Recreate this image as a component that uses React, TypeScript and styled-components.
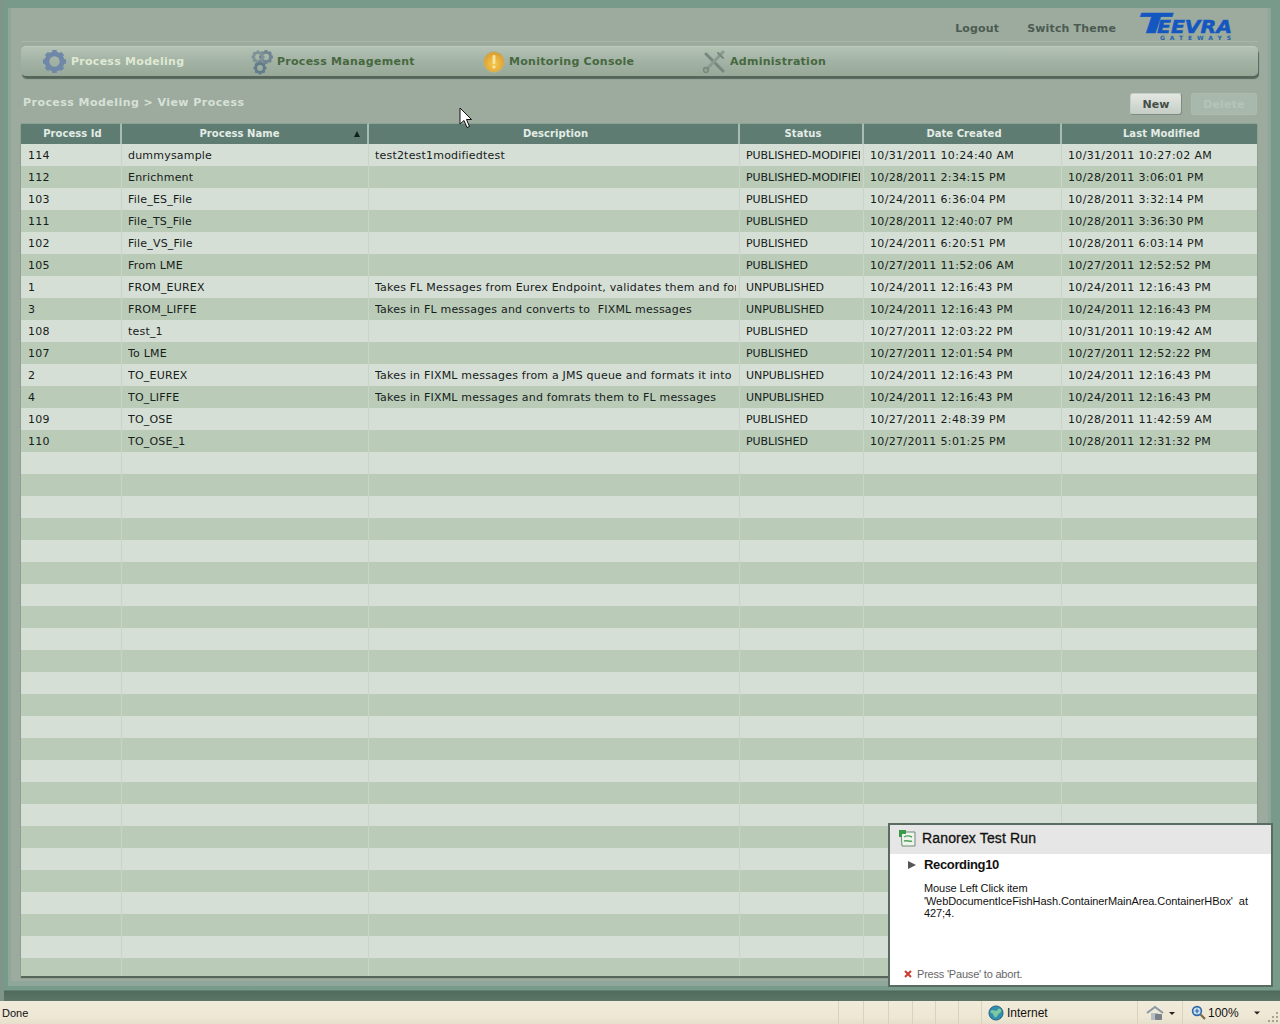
import React from "react";
import styled, { createGlobalStyle } from "styled-components";

const Global = createGlobalStyle`
  html, body { margin: 0; padding: 0; height: 100%; overflow: hidden; background: #5f7d6f; }
  #root { height: 1024px; }
`;

const UI = `"DejaVu Sans", Verdana, sans-serif`;
const SYS = `"Liberation Sans", Arial, sans-serif`;

const Page = styled.div`
  position: relative;
  width: 1280px;
  height: 1024px;
  display: flex;
  flex-direction: column;
  overflow: hidden;
  font-family: ${UI};
`;
const Frame = styled.div`
  height: 1001px;
  flex: none;
  box-sizing: border-box;
  padding: 8px 9px 15px 4px;
  border-left: 4px solid #7f9589;
  background: linear-gradient(180deg, #789a8a 0, #789a8a 98.9%, #4f6a5b 99%, #5c7567 100%);
  display: flex;
`;
const Panel = styled.div`
  flex: 1;
  min-width: 0;
  box-sizing: border-box;
  padding: 0 10px;
  border-left: 3px solid #8fa79a;
  border-right: 3px solid #8fa79a;
  border-bottom: 5px solid #8fa79a;
  background: #9cab9e;
  display: flex;
  flex-direction: column;
`;
const TopBar = styled.div`
  height: 34px;
  flex: none;
  box-sizing: border-box;
  padding: 0 26px 0 0;
  display: flex;
  align-items: center;
  justify-content: flex-end;
  gap: 22px;
  border-bottom: 1px solid #a8b6aa;
`;
const TopLink = styled.a<{ $after?: number }>`
  font-size: 11px;
  font-weight: 700;
  letter-spacing: 0.15px;
  color: #4c5b52;
  margin-top: 7px;
  margin-right: ${(p) => p.$after ?? 0}px;
`;
const Logo = styled.svg`
  width: 94px;
  height: 26px;
  margin-top: 6px;
  overflow: visible;
`;
const Nav = styled.nav`
  height: 30px;
  flex: none;
  box-sizing: border-box;
  margin: 4px 0 0 0;
  border-radius: 5px;
  border-top: 1px solid #bdcbbd;
  background: linear-gradient(180deg, #b3c2b3 0, #a2b2a4 50%, #97a898 100%);
  box-shadow: 1px 3px 1px #56665a;
  display: flex;
  align-items: center;
`;
const NavItem = styled.div<{ $w: number; $pad?: number }>`
  width: ${(p) => p.$w}px;
  flex: none;
  box-sizing: border-box;
  padding-left: ${(p) => p.$pad ?? 0}px;
  display: flex;
  align-items: center;
  gap: 4px;
  font-size: 11px;
  font-weight: 700;
  letter-spacing: 0.27px;
`;
const NavLabel = styled.span<{ $active?: boolean }>`
  color: ${(p) => (p.$active ? "#dfe9d2" : "#47683f")};
`;
const CrumbRow = styled.div`
  height: 47px;
  flex: none;
  display: flex;
  align-items: center;
  justify-content: space-between;
  padding: 0 1px 0 2px;
`;
const Crumb = styled.div`
  font-size: 11px;
  font-weight: 700;
  letter-spacing: 0.45px;
  color: #d7e0d6;
  margin-top: 5px;
`;
const Buttons = styled.div`
  display: flex;
  gap: 9px;
  margin-top: 9px;
`;
const Btn = styled.button<{ $off?: boolean }>`
  height: 22px;
  padding: 0;
  width: ${(p) => (p.$off ? 66 : 52)}px;
  font-family: ${UI};
  font-size: 11px;
  font-weight: 700;
  letter-spacing: ${(p) => (p.$off ? 0.2 : 0)}px;
  border-radius: 3px;
  border: 1px solid ${(p) => (p.$off ? "#aebcb0" : "#c6cfc7")};
  border-right-color: ${(p) => (p.$off ? "#aebcb0" : "#7d8b80")};
  border-bottom-color: ${(p) => (p.$off ? "#aebcb0" : "#7d8b80")};
  color: ${(p) => (p.$off ? "#b6c4b8" : "#454f48")};
  background: ${(p) => (p.$off ? "#a9b8ac" : "linear-gradient(180deg,#e3e7e2,#c5cdc6)")};
`;
const TableWrap = styled.div`
  flex: 1;
  min-height: 0;
  margin: 0 1px 5px 0;
  overflow: hidden;
  box-shadow: 0 2px 1px #56665a;
  background: #bacbb8;
`;
const Grid = styled.table`
  width: 1236px;
  table-layout: fixed;
  border-collapse: separate;
  border-spacing: 0;
`;
const Col = styled.col<{ $w: number }>`
  width: ${(p) => p.$w}px;
`;
const Th = styled.th<{ $sorted?: boolean }>`
  height: 21px;
  padding: 0 ${(p) => (p.$sorted ? 14 : 0)}px 2px 4px;
  position: relative;
  box-sizing: border-box;
  background: #5f7c72;
  color: #e3ece6;
  font-size: 10px;
  font-weight: 700;
  letter-spacing: 0.05px;
  text-align: center;
  border-right: 2px solid #a9bcb2;
  border-top: 1px solid #8aa396;
  &:last-child { border-right: none; }
`;
const SortMark = styled.span`
  position: absolute;
  right: 7px;
  top: 7px;
  width: 0;
  height: 0;
  border-left: 3px solid transparent;
  border-right: 3px solid transparent;
  border-bottom: 6px solid #10201a;
`;
const Tr = styled.tr<{ $odd: boolean }>`
  height: 22px;
  background: ${(p) => (p.$odd ? "#bacbb8" : "#d6dfd6")};
`;
const Td = styled.td`
  padding: 0 3px 0 6px;
  height: 22px;
  box-sizing: border-box;
  font-size: 11px;
  letter-spacing: 0.2px;
  color: #16201a;
  border-right: 1px solid #c8d4c8;
  &:first-child { padding-left: 7px; }
  &:nth-child(4) { letter-spacing: -0.05px; }
  &:nth-child(n + 5) { letter-spacing: 0.33px; }
  &:last-child { border-right: none; }
`;
const CellText = styled.div`
  white-space: pre;
  overflow: hidden;
`;
const StatusBar = styled.footer`
  flex: 1;
  display: flex;
  align-items: center;
  background: linear-gradient(180deg, #f1ebdb 0, #eee7d4 70%, #e6dfcb 100%);
  font-family: ${SYS};
  font-size: 12px;
  color: #111;
`;
const Done = styled.span`
  width: 838px;
  flex: none;
  box-sizing: border-box;
  padding-left: 2px;
  font-size: 11px;
`;
const Well = styled.span<{ $w: number; $pad?: number; $gap?: number }>`
  width: ${(p) => p.$w}px;
  height: 100%;
  flex: none;
  display: flex;
  align-items: center;
  gap: ${(p) => p.$gap ?? 3}px;
  box-sizing: border-box;
  padding-left: ${(p) => p.$pad ?? 0}px;
  border-left: 1px solid #d9d2bd;
`;
const Drop = styled.svg`
  margin-left: 11px;
`;
const Popup = styled.aside`
  position: absolute;
  left: 888px;
  top: 823px;
  width: 385px;
  height: 164px;
  box-sizing: border-box;
  border: 2px solid #5a6b62;
  background: #fff;
  font-family: ${SYS};
  display: flex;
  flex-direction: column;
  color: #111;
`;
const PopHead = styled.div`
  height: 29px;
  flex: none;
  box-sizing: border-box;
  padding: 0 0 3px 8px;
  background: #e6e6e6;
  display: flex;
  align-items: center;
  gap: 5px;
  font-size: 14px;
  letter-spacing: 0.15px;
  -webkit-text-stroke: 0.3px #111;
`;
const PopTitle = styled.div`
  display: flex;
  align-items: center;
  gap: 7px;
  padding: 3px 0 0 17px;
  font-size: 13px;
  font-weight: 700;
  letter-spacing: -0.35px;
`;
const PopBody = styled.div`
  flex: 1;
  padding: 10px 0 0 34px;
  font-size: 11px;
  line-height: 12.6px;
  letter-spacing: -0.08px;
  white-space: nowrap;
`;
const PopFoot = styled.div`
  height: 22px;
  flex: none;
  display: flex;
  align-items: center;
  gap: 5px;
  padding-left: 14px;
  font-size: 11px;
  letter-spacing: -0.2px;
  color: #666;
`;
const Cursor = styled.svg`
  position: absolute;
  left: 459px;
  top: 107px;
`;
const Grip = styled.svg`
  position: absolute;
  right: 1px;
  bottom: 1px;
`;

const cols = [101, 247, 371, 124, 198, 195];
const heads = ["Process Id", "Process Name", "Description", "Status", "Date Created", "Last Modified"];
const P = "PUBLISHED";
const U = "UNPUBLISHED";
const M = "PUBLISHED-MODIFIED";
const rows: string[][] = [
  ["114", "dummysample", "test2test1modifiedtest", M, "10/31/2011 10:24:40 AM", "10/31/2011 10:27:02 AM"],
  ["112", "Enrichment", "", M, "10/28/2011 2:34:15 PM", "10/28/2011 3:06:01 PM"],
  ["103", "File_ES_File", "", P, "10/24/2011 6:36:04 PM", "10/28/2011 3:32:14 PM"],
  ["111", "File_TS_File", "", P, "10/28/2011 12:40:07 PM", "10/28/2011 3:36:30 PM"],
  ["102", "File_VS_File", "", P, "10/24/2011 6:20:51 PM", "10/28/2011 6:03:14 PM"],
  ["105", "From LME", "", P, "10/27/2011 11:52:06 AM", "10/27/2011 12:52:52 PM"],
  ["1", "FROM_EUREX", "Takes FL Messages from Eurex Endpoint, validates them and forwards them", U, "10/24/2011 12:16:43 PM", "10/24/2011 12:16:43 PM"],
  ["3", "FROM_LIFFE", "Takes in FL messages and converts to  FIXML messages", U, "10/24/2011 12:16:43 PM", "10/24/2011 12:16:43 PM"],
  ["108", "test_1", "", P, "10/27/2011 12:03:22 PM", "10/31/2011 10:19:42 AM"],
  ["107", "To LME", "", P, "10/27/2011 12:01:54 PM", "10/27/2011 12:52:22 PM"],
  ["2", "TO_EUREX", "Takes in FIXML messages from a JMS queue and formats it into FL messages", U, "10/24/2011 12:16:43 PM", "10/24/2011 12:16:43 PM"],
  ["4", "TO_LIFFE", "Takes in FIXML messages and fomrats them to FL messages", U, "10/24/2011 12:16:43 PM", "10/24/2011 12:16:43 PM"],
  ["109", "TO_OSE", "", P, "10/27/2011 2:48:39 PM", "10/28/2011 11:42:59 AM"],
  ["110", "TO_OSE_1", "", P, "10/27/2011 5:01:25 PM", "10/28/2011 12:31:32 PM"],
];
const blank = ["", "", "", "", "", ""];
const allRows = [...rows, ...Array.from({ length: 24 }, () => blank)];
const emptyWells = [25, 25, 24, 23, 23, 23];

const Gear = ({ x, y, r, fill }: { x: number; y: number; r: number; fill: string }) => (
  <g>
    <circle cx={x} cy={y} r={r * 0.66} fill="none" stroke={fill} strokeWidth={r * 0.42} />
    {[0, 45, 90, 135, 180, 225, 270, 315].map((a) => (
      <rect key={a} x={x - r * 0.2} y={y - r} width={r * 0.4} height={r * 0.4} fill={fill} transform={`rotate(${a} ${x} ${y})`} />
    ))}
  </g>
);

export default function App() {
  return (
    <Page>
      <Global />
      <Frame>
        <Panel>
          <TopBar>
            <TopLink $after={6}>Logout</TopLink>
            <TopLink>Switch Theme</TopLink>
            <Logo viewBox="0 0 94 26" role="img">
              <text x="0" y="18" fontFamily={UI} fontSize="27" fontWeight="900" fontStyle="italic" fill="#1457c0" stroke="#1457c0" strokeWidth=".5" textLength="32" lengthAdjust="spacingAndGlyphs">T</text>
              <text x="19" y="18" fontFamily={UI} fontSize="17" fontWeight="900" fontStyle="italic" fill="#1457c0" stroke="#1457c0" strokeWidth=".5" textLength="75" lengthAdjust="spacingAndGlyphs">EEVRA</text>
              <text x="22" y="24.5" fontFamily={UI} fontSize="6" fontWeight="700" fill="#1f62ac" textLength="71" lengthAdjust="spacing">GATEWAYS</text>
            </Logo>
          </TopBar>
          <Nav>
            <NavItem $w={230} $pad={21}>
              <svg width="25" height="25" viewBox="0 0 25 25">
                <Gear x={12.5} y={12.5} r={11.5} fill="#6f88a8" />
              </svg>
              <NavLabel $active>Process Modeling</NavLabel>
            </NavItem>
            <NavItem $w={232}>
              <svg width="22" height="26" viewBox="0 0 22 26">
                <Gear x={15} y={8} r={7} fill="#6f8590" />
                <Gear x={7} y={8} r={6.5} fill="#7f9398" />
                <Gear x={9} y={19} r={6.5} fill="#647c8a" />
              </svg>
              <NavLabel>Process Management</NavLabel>
            </NavItem>
            <NavItem $w={219}>
              <svg width="22" height="22" viewBox="0 0 22 22">
                <defs>
                  <radialGradient id="amb" cx="50%" cy="60%" r="60%">
                    <stop offset="0" stopColor="#f7c94e" />
                    <stop offset="1" stopColor="#d99a2e" />
                  </radialGradient>
                </defs>
                <circle cx="11" cy="11" r="10.5" fill="url(#amb)" stroke="#aab59a" />
                <rect x="9.6" y="4" width="2.8" height="9" rx="1.2" fill="#f4e6a0" />
                <circle cx="11" cy="16" r="1.6" fill="#f4e6a0" />
              </svg>
              <NavLabel>Monitoring Console</NavLabel>
            </NavItem>
            <NavItem $w={180}>
              <svg width="24" height="24" viewBox="0 0 24 24" fill="none" strokeLinecap="round">
                <path d="M4 4L21 21" stroke="#76877e" strokeWidth="3" />
                <path d="M21 2L5 19" stroke="#8a9a90" strokeWidth="3" />
                <circle cx="4" cy="20" r="2.4" stroke="#76877e" strokeWidth="1.5" />
                <path d="M16 3l5 5" stroke="#76877e" strokeWidth="2" />
              </svg>
              <NavLabel>Administration</NavLabel>
            </NavItem>
          </Nav>
          <CrumbRow>
            <Crumb>Process Modeling &gt; View Process</Crumb>
            <Buttons>
              <Btn>New</Btn>
              <Btn $off>Delete</Btn>
            </Buttons>
          </CrumbRow>
          <TableWrap>
            <Grid>
              <colgroup>
                {cols.map((c, i) => (
                  <Col key={i} $w={c} />
                ))}
              </colgroup>
              <thead>
                <tr>
                  {heads.map((h, i) => (
                    <Th key={h} $sorted={i === 1}>
                      {h}
                      {i === 1 && <SortMark />}
                    </Th>
                  ))}
                </tr>
              </thead>
              <tbody>
                {allRows.map((r, i) => (
                  <Tr key={i} $odd={i % 2 === 1}>
                    {r.map((c, j) => (
                      <Td key={j}>
                        <CellText>{c}</CellText>
                      </Td>
                    ))}
                  </Tr>
                ))}
              </tbody>
            </Grid>
          </TableWrap>
        </Panel>
      </Frame>
      <StatusBar>
        <Done>Done</Done>
        {emptyWells.map((w, i) => (
          <Well key={i} $w={w} />
        ))}
        <Well $w={156} $pad={6}>
          <svg width="16" height="16" viewBox="0 0 17 17">
            <circle cx="8.5" cy="8.5" r="7.5" fill="#2f8fb0" stroke="#23607a" />
            <path d="M3 6c3-2 4 1 6 0s2-3 4-2 1 4-1 5-2 4-4 4-2-3-3-4-3 0-2-3z" fill="#7fc7a0" />
          </svg>
          Internet
        </Well>
        <Well $w={45} $pad={8}>
          <svg width="30" height="16" viewBox="0 0 30 16">
            <path d="M1 8L9 2l8 6" fill="none" stroke="#8a97a5" strokeWidth="2" />
            <rect x="5" y="8" width="7" height="7" fill="#b5bec5" />
            <rect x="9" y="9" width="7" height="6" rx="1" fill="#7a8288" />
            <path d="M23 7h6l-3 3z" fill="#222" />
          </svg>
        </Well>
        <Well $w={98} $pad={8} $gap={2}>
          <svg width="15" height="15" viewBox="0 0 15 15">
            <circle cx="6" cy="6" r="4.4" fill="#cfe2f5" stroke="#2d68a8" strokeWidth="1.6" />
            <path d="M9.5 9.5L14 14" stroke="#7c6a44" strokeWidth="2.2" />
            <path d="M3.8 6h4.4M6 3.8v4.4" stroke="#2d68a8" strokeWidth="1.2" />
          </svg>
          100%
          <Drop width="10" height="6" viewBox="0 0 10 6">
            <path d="M2 1.5h6l-3 3z" fill="#222" />
          </Drop>
        </Well>
      </StatusBar>
      <Grip width="12" height="12" viewBox="0 0 12 12" fill="#a8a28e">
        <rect x="9" y="1" width="2" height="2" />
        <rect x="5" y="5" width="2" height="2" />
        <rect x="9" y="5" width="2" height="2" />
        <rect x="1" y="9" width="2" height="2" />
        <rect x="5" y="9" width="2" height="2" />
        <rect x="9" y="9" width="2" height="2" />
      </Grip>
      <Popup>
        <PopHead>
          <svg width="19" height="18" viewBox="0 0 19 18">
            <path d="M3 3h14v14H4z" fill="#eef4ec" stroke="#6f8a76" />
            <path d="M1 1h7v4H4v3H1z" fill="#3a9a4a" />
            <path d="M6 8c3-2 6-1 8 0M6 12c3-1 6 1 8 0" fill="none" stroke="#4ba35a" strokeWidth="1.4" />
          </svg>
          Ranorex Test Run
        </PopHead>
        <PopTitle>
          <svg width="10" height="10" viewBox="0 0 10 10">
            <path d="M1 1L9 5 1 9z" fill="#555" />
          </svg>
          Recording10
        </PopTitle>
        <PopBody>
          Mouse Left Click item
          <br />
          'WebDocumentIceFishHash.ContainerMainArea.ContainerHBox'&nbsp; at
          <br />
          427;4.
        </PopBody>
        <PopFoot>
          <svg width="8" height="8" viewBox="0 0 8 8">
            <path d="M1 1L7 7M7 1L1 7" stroke="#cc3b32" strokeWidth="2" />
          </svg>
          Press 'Pause' to abort.
        </PopFoot>
      </Popup>
      <Cursor width="13" height="22" viewBox="0 0 13 22">
        <path d="M1 1V17L5 13.5L8 20.5L10.5 19.5L7.5 12.5H12.5Z" fill="#fff" stroke="#111" strokeWidth="1" />
      </Cursor>
    </Page>
  );
}
